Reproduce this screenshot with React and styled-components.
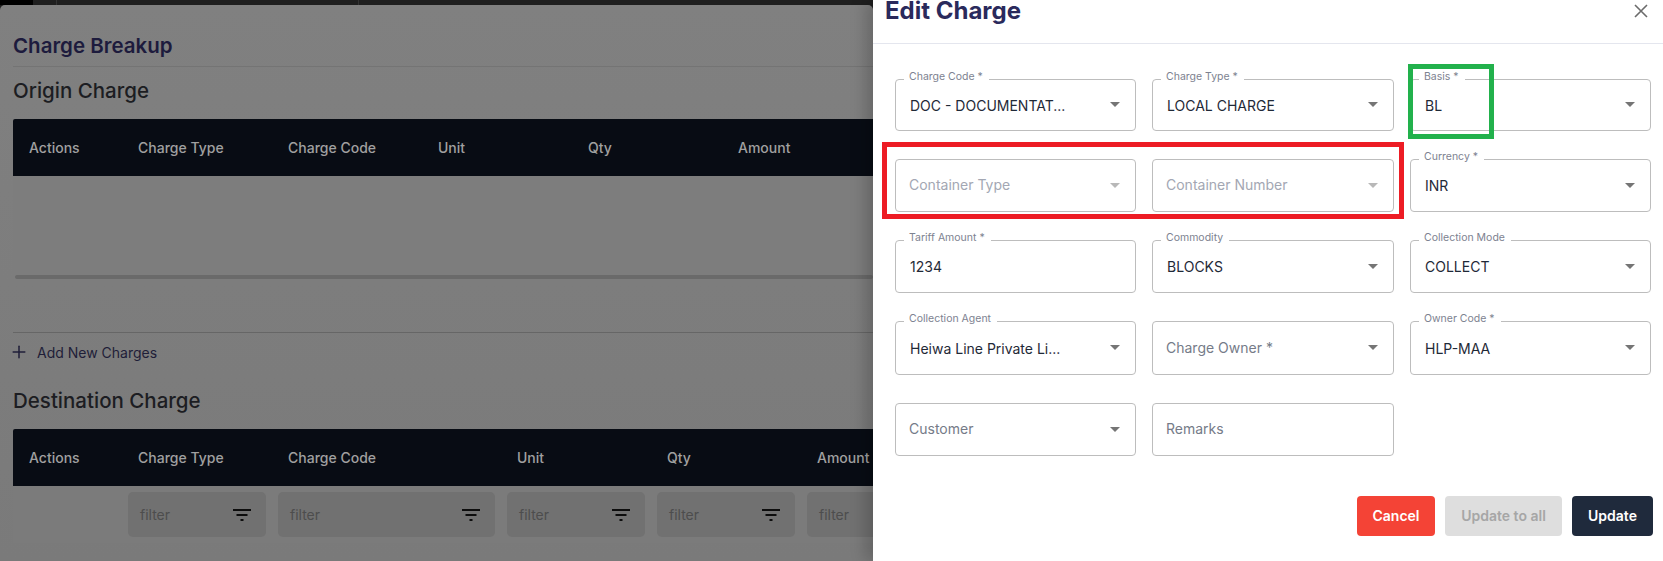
import React from "react";
import styled, { createGlobalStyle } from "styled-components";
import { Plus } from "lucide-react";

const GlobalStyle = createGlobalStyle`
  html, body { margin: 0; padding: 0; background: #808080; }
  body { font-family: "Inter", "Liberation Sans", sans-serif; }
  * { box-sizing: border-box; }
`;

const originColumns = ["Actions", "Charge Type", "Charge Code", "Unit", "Qty", "Amount"];
const originWidths = "115px repeat(5, 150px)";
const destWidths = "115px 150px 229px 150px 150px 150px";

const rows = [
  { label: "Charge Code *", value: "DOC - DOCUMENTAT...", arrow: true },
  { label: "Charge Type *", value: "LOCAL CHARGE", arrow: true },
  { label: "Basis *", value: "BL", arrow: true },
  { placeholder: "Container Type", arrow: true, disabled: true },
  { placeholder: "Container Number", arrow: true, disabled: true },
  { label: "Currency *", value: "INR", arrow: true },
  { label: "Tariff Amount *", value: "1234" },
  { label: "Commodity", value: "BLOCKS", arrow: true },
  { label: "Collection Mode", value: "COLLECT", arrow: true },
  { label: "Collection Agent", value: "Heiwa Line Private Li...", arrow: true },
  { placeholder: "Charge Owner *", arrow: true },
  { label: "Owner Code *", value: "HLP-MAA", arrow: true },
  { placeholder: "Customer", arrow: true },
  { placeholder: "Remarks" },
];

const Arrow = () => (
  <ArrowIcon viewBox="0 0 10 5">
    <path d="M0 0h10L5 5z" fill="currentColor" />
  </ArrowIcon>
);

const FilterIcon = () => (
  <FilterSvg viewBox="0 0 18 12">
    <path d="M0 0h18v2H0zM3.500 5h11v2h-11zM7.500 10h3v2h-3z" fill="#0d0d0d" />
  </FilterSvg>
);

const Field = ({ label, value, placeholder, arrow, disabled }) => (
  <FieldBox>
    {label && <FieldLabel>{label}</FieldLabel>}
    {value ? <FieldValue>{value}</FieldValue> : <Placeholder $disabled={disabled}>{placeholder}</Placeholder>}
    {arrow && (
      <ArrowWrap $disabled={disabled}>
        <Arrow />
      </ArrowWrap>
    )}
  </FieldBox>
);

const App = () => {
  return (
    <Screen>
      <GlobalStyle />
      <Backdrop>
        <TopBar>
          <TopBlack />
          <TopSegment $width={24} />
          <TopSegment $width={302} />
        </TopBar>
        <Sheet>
          <SheetTitle>Charge Breakup</SheetTitle>
          <Divider />
          <SectionTitle>Origin Charge</SectionTitle>
          <TableHead $columns={originWidths}>
            {originColumns.map((c) => (
              <HeadCell key={c}>{c}</HeadCell>
            ))}
          </TableHead>
          <EmptyBody />
          <Scrollbar />
          <TableEnd />
          <AddRow>
            <Plus size={20} strokeWidth={1.8} />
            <span>Add New Charges</span>
          </AddRow>
          <DestTitle>Destination Charge</DestTitle>
          <TableHead $columns={destWidths}>
            {originColumns.map((c) => (
              <HeadCell key={c}>{c}</HeadCell>
            ))}
          </TableHead>
          <FilterRow $columns={destWidths}>
            <span />
            {originColumns.slice(1).map((c) => (
              <FilterBox key={c}>
                <FilterText>filter</FilterText>
                <FilterIcon />
              </FilterBox>
            ))}
          </FilterRow>
        </Sheet>
      </Backdrop>
      <Drawer>
        <DrawerHeader>
          <DrawerTitle>Edit Charge</DrawerTitle>
          <CloseIcon viewBox="0 0 14 14">
            <path d="M1 1l12 12M13 1L1 13" stroke="currentColor" strokeWidth="1.6" fill="none" />
          </CloseIcon>
        </DrawerHeader>
        <FormGrid>
          {rows.map((r, i) => (
            <Field key={i} {...r} />
          ))}
        </FormGrid>
        <Footer>
          <ActionButton $bg="#f44336" $fg="#ffffff" $width={78}>Cancel</ActionButton>
          <ActionButton $bg="#dedede" $fg="#a6a6a6" $width={117}>Update to all</ActionButton>
          <ActionButton $bg="#1f2a3c" $fg="#ffffff" $width={81}>Update</ActionButton>
        </Footer>
        <RedMark />
        <GreenMark />
      </Drawer>
    </Screen>
  );
};
export default App;

const Screen = styled.div`
  width: 1663px;
  height: 561px;
  display: flex;
  overflow: hidden;
  position: relative;
`;

const Backdrop = styled.div`
  flex: 1;
  min-width: 0;
  display: flex;
  flex-direction: column;
  background: #1f1f1f;
`;

const TopBar = styled.div`
  height: 5px;
  display: flex;
  flex-shrink: 0;
`;

const TopBlack = styled.div`
  width: 33px;
  background: #000;
`;

const TopSegment = styled.div`
  width: ${(p) => p.$width}px;
  border-right: 1px solid #333;
`;

const Sheet = styled.div`
  flex: 1;
  background: linear-gradient(#808080, #7a7a7a);
  border-radius: 5px 5px 0 0;
  padding: 29px 0 0 13px;
  overflow: hidden;
`;

const SheetTitle = styled.div`
  font-size: 20.5px;
  line-height: 24px;
  font-weight: 600;
  color: #1d1b3d;
`;

const Divider = styled.div`
  height: 1px;
  margin-top: 8px;
  background: #747474;
`;

const SectionTitle = styled.div`
  margin-top: 12px;
  font-size: 20.5px;
  line-height: 24px;
  font-weight: 500;
  color: #1c1d22;
`;

const DestTitle = styled(SectionTitle)`
  margin-top: 27px;
`;

const TableHead = styled.div`
  display: grid;
  grid-template-columns: ${(p) => p.$columns};
  align-items: center;
  height: 57px;
  margin-top: 16px;
  width: 900px;
  background: #080c14;
  border-radius: 2px 2px 0 0;
`;

const HeadCell = styled.div`
  padding-left: 16px;
  font-size: 14px;
  font-weight: 500;
  white-space: nowrap;
  color: #a0a0a0;
  &:not(:first-child) {
    padding-left: 10px;
  }
`;

const EmptyBody = styled.div`
  height: 99px;
  background: #7d7d7d;
`;

const Scrollbar = styled.div`
  height: 4px;
  margin-left: 2px;
  background: #6a6a6a;
  border-radius: 2px;
`;

const TableEnd = styled.div`
  height: 54px;
  border-bottom: 1px solid #666;
`;

const AddRow = styled.div`
  display: flex;
  align-items: center;
  gap: 8px;
  height: 20px;
  margin-top: 9px;
  margin-left: -4px;
  font-size: 14px;
  font-weight: 400;
  color: #1f1e38;
`;

const FilterRow = styled.div`
  display: grid;
  grid-template-columns: ${(p) => p.$columns};
  align-items: center;
  width: 900px;
  height: 57px;
  background: #7b7b7b;
`;

const FilterBox = styled.div`
  display: flex;
  align-items: center;
  justify-content: space-between;
  height: 45px;
  margin-right: 12px;
  padding: 0 15px 0 12px;
  border-radius: 5px;
  background: #717171;
`;

const FilterText = styled.span`
  font-size: 14px;
  color: #4d4d4d;
`;

const FilterSvg = styled.svg`
  width: 18px;
  height: 12px;
`;

const Drawer = styled.div`
  width: 790px;
  flex-shrink: 0;
  position: relative;
  background: #fff;
  box-shadow: -8px 0 14px rgba(0, 0, 0, 0.18);
`;

const DrawerHeader = styled.div`
  display: flex;
  justify-content: space-between;
  height: 44px;
  padding: 0 15px 0 12px;
  border-bottom: 1px solid #e4e6ee;
`;

const DrawerTitle = styled.div`
  font-size: 24px;
  line-height: 22px;
  font-weight: 700;
  color: #2a2a5c;
`;

const CloseIcon = styled.svg`
  width: 14px;
  height: 14px;
  margin-top: 4px;
  color: #6b6b6b;
`;

const FormGrid = styled.div`
  display: grid;
  grid-template-columns: 241px 242px 241px;
  grid-template-rows: 52px 53px 53px 54px 53px;
  column-gap: 16px;
  row-gap: 28px;
  padding: 35px 12px 0 22px;
`;

const FieldBox = styled.div`
  position: relative;
  display: flex;
  align-items: center;
  padding: 0 14px;
  border: 1px solid #bdbdbd;
  border-radius: 4px;
`;

const FieldLabel = styled.span`
  position: absolute;
  top: -10px;
  left: 8px;
  padding: 0 6px 0 5px;
  background: linear-gradient(transparent 40%, #fff 40%);
  font-size: 10.5px;
  line-height: 14px;
  color: #7d8290;
  white-space: nowrap;
`;

const FieldValue = styled.span`
  font-size: 14px;
  color: #1f2937;
  white-space: nowrap;
`;

const Placeholder = styled.span`
  margin: -2px 0 0 -1px;
  font-size: 14px;
  color: ${(p) => (p.$disabled ? "#a3a7b3" : "#757b88")};
  white-space: nowrap;
`;

const ArrowWrap = styled.span`
  position: absolute;
  right: 15px;
  top: 50%;
  margin-top: -3px;
  display: flex;
  color: ${(p) => (p.$disabled ? "#b8b8b8" : "#757575")};
`;

const ArrowIcon = styled.svg`
  width: 10px;
  height: 5px;
`;

const Footer = styled.div`
  display: flex;
  justify-content: flex-end;
  gap: 10px;
  margin-top: 40px;
  padding-right: 10px;
`;

const ActionButton = styled.div`
  display: flex;
  align-items: center;
  justify-content: center;
  width: ${(p) => p.$width}px;
  height: 40px;
  padding-bottom: 2px;
  border-radius: 4px;
  background: ${(p) => p.$bg};
  color: ${(p) => p.$fg};
  font-size: 14px;
  font-weight: 600;
`;

const RedMark = styled.div`
  position: absolute;
  left: 9px;
  top: 142px;
  width: 522px;
  height: 77px;
  border: 5px solid #ed1c24;
`;

const GreenMark = styled.div`
  position: absolute;
  left: 535px;
  top: 64px;
  width: 86px;
  height: 75px;
  border: 5px solid #22b14c;
`;
